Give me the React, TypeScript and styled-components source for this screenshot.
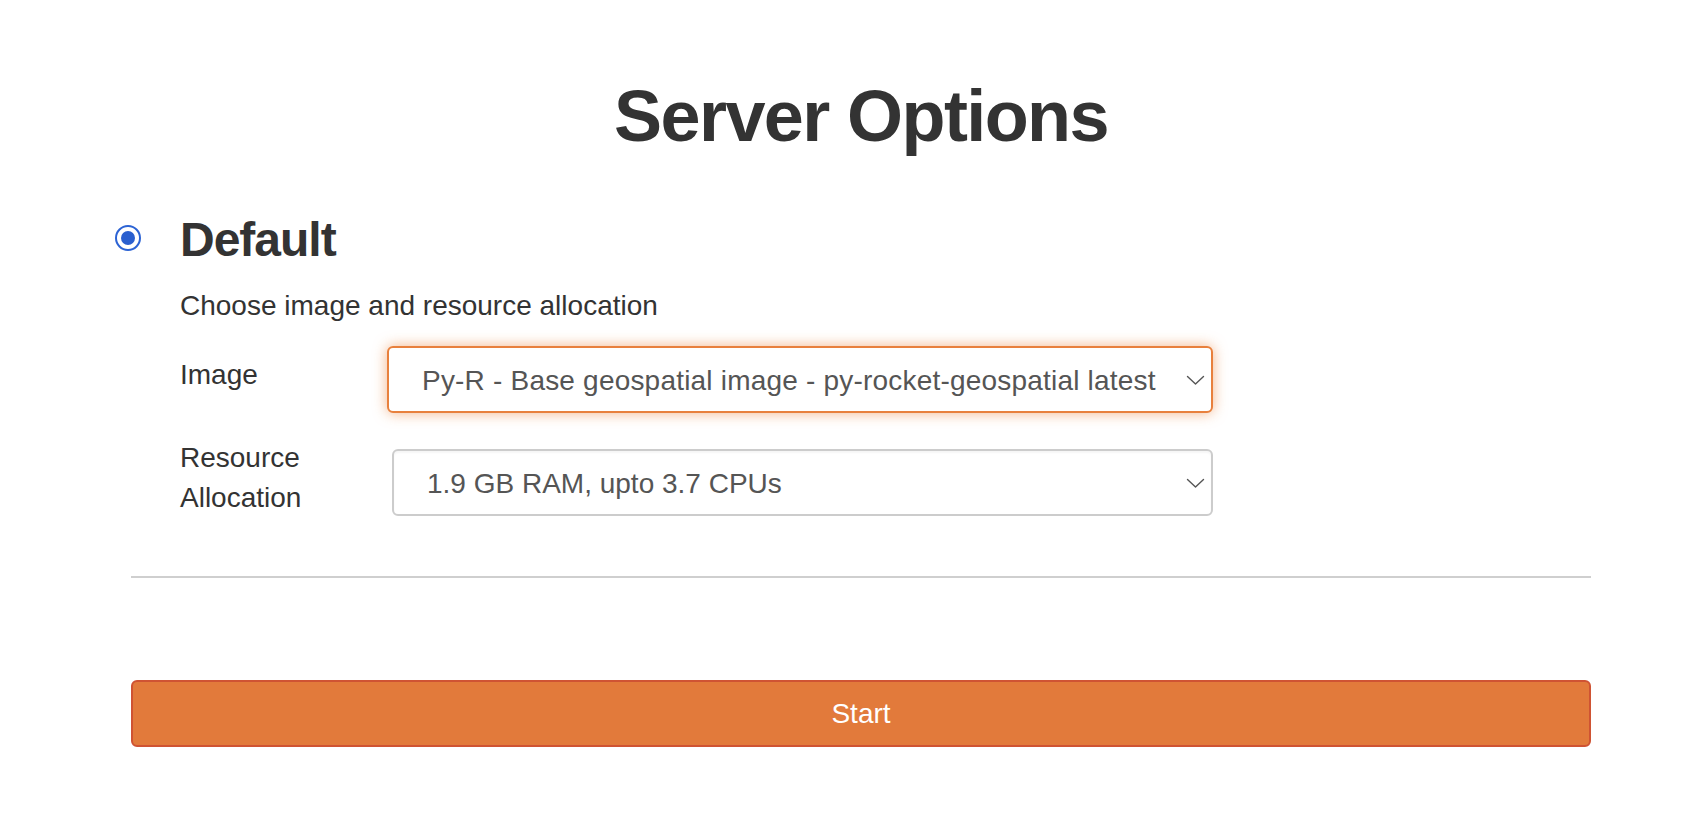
import React, { FC } from "react"
import styled, { createGlobalStyle } from "styled-components"

const GlobalStyle = createGlobalStyle`
  html, body {
    margin: 0;
    padding: 0;
    background: #ffffff;
  }
  body {
    font-family: "Liberation Sans", Arial, Helvetica, sans-serif;
    color: #333333;
  }
`

const StyledPage = styled.div`
  width: 1460px;
  padding-left: 131px;
  padding-bottom: 80px;
`

const StyledTitle = styled.h1`
  margin: 76px 0 0;
  font-size: 72px;
  line-height: 80px;
  font-weight: 700;
  letter-spacing: -1.6px;
  text-align: center;
`

const StyledOption = styled.div`
  display: flex;
  align-items: flex-start;
  gap: 39px;
  margin: 58px 0 0 -16px;
`

const StyledRadio = styled.span`
  flex: none;
  box-sizing: border-box;
  width: 26px;
  height: 26px;
  margin-top: 11px;
  border: 2px solid #2c63d4;
  border-radius: 50%;
  display: flex;
  align-items: center;
  justify-content: center;

  &::after {
    content: "";
    width: 14px;
    height: 14px;
    border-radius: 50%;
    background: #2a5fcf;
  }
`

const StyledBody = styled.div`
  flex: 1;
`

const StyledHeading = styled.h3`
  margin: 0;
  font-size: 48px;
  line-height: 52px;
  font-weight: 700;
  letter-spacing: -1px;
`

const StyledDescription = styled.p`
  margin: 20px 0 0;
  font-size: 28px;
  line-height: 40px;
`

const StyledRow = styled.div<{ $gap: number }>`
  display: flex;
  align-items: center;
  margin-top: ${(p) => p.$gap}px;
`

const StyledLabel = styled.label`
  width: 207px;
  flex: none;
  padding-bottom: 9px;
  font-size: 28px;
  line-height: 40px;
`

const StyledSelect = styled.div<{ $focused?: boolean; $inset?: number }>`
  box-sizing: border-box;
  width: ${(p) => 826 - (p.$inset || 0)}px;
  height: 67px;
  margin-left: ${(p) => p.$inset || 0}px;
  padding: 2px 6px 0 33px;
  display: flex;
  align-items: center;
  border: 2px solid ${(p) => (p.$focused ? "#e8803d" : "#cccccc")};
  border-radius: 6px;
  background: #ffffff;
  box-shadow: ${(p) =>
    p.$focused ? "0 0 14px rgba(235, 128, 56, 0.6)" : "inset 0 2px 2px rgba(0, 0, 0, 0.04)"};
  color: #555555;
  font-size: 28px;
  line-height: 40px;
  white-space: nowrap;
`

const StyledValue = styled.span<{ $spacing?: number }>`
  flex: 1;
  letter-spacing: ${(p) => p.$spacing || 0}px;
`

const StyledChevron = styled.svg`
  flex: none;
  width: 19px;
  height: 11px;
`

const StyledDivider = styled.hr`
  margin: 49px 0 0;
  border: 0;
  border-top: 2px solid #cfcfcf;
`

const StyledButton = styled.button`
  display: block;
  box-sizing: border-box;
  width: 100%;
  height: 67px;
  margin-top: 102px;
  border: 2px solid #cf5333;
  border-radius: 6px;
  background: #e27a3b;
  color: #ffffff;
  font-family: inherit;
  font-size: 28px;
  line-height: 40px;
  cursor: pointer;
`

const Chevron: FC = () => (
  <StyledChevron viewBox="0 0 19 11">
    <polyline
      points="1.5,1.5 9.5,9 17.5,1.5"
      fill="none"
      stroke="#555555"
      strokeWidth="1.4"
      strokeLinecap="round"
      strokeLinejoin="round"
    />
  </StyledChevron>
)

const App: FC = () => (
  <StyledPage>
    <GlobalStyle />
    <StyledTitle>Server Options</StyledTitle>
    <StyledOption>
      <StyledRadio />
      <StyledBody>
        <StyledHeading>Default</StyledHeading>
        <StyledDescription>Choose image and resource allocation</StyledDescription>
        <StyledRow $gap={20}>
          <StyledLabel>Image</StyledLabel>
          <StyledSelect $focused>
            <StyledValue $spacing={0.2}>
              Py-R - Base geospatial image - py-rocket-geospatial latest
            </StyledValue>
            <Chevron />
          </StyledSelect>
        </StyledRow>
        <StyledRow $gap={25}>
          <StyledLabel>
            Resource
            <br />
            Allocation
          </StyledLabel>
          <StyledSelect $inset={5}>
            <StyledValue>1.9 GB RAM, upto 3.7 CPUs</StyledValue>
            <Chevron />
          </StyledSelect>
        </StyledRow>
      </StyledBody>
    </StyledOption>
    <StyledDivider />
    <StyledButton>Start</StyledButton>
  </StyledPage>
)

export default App
